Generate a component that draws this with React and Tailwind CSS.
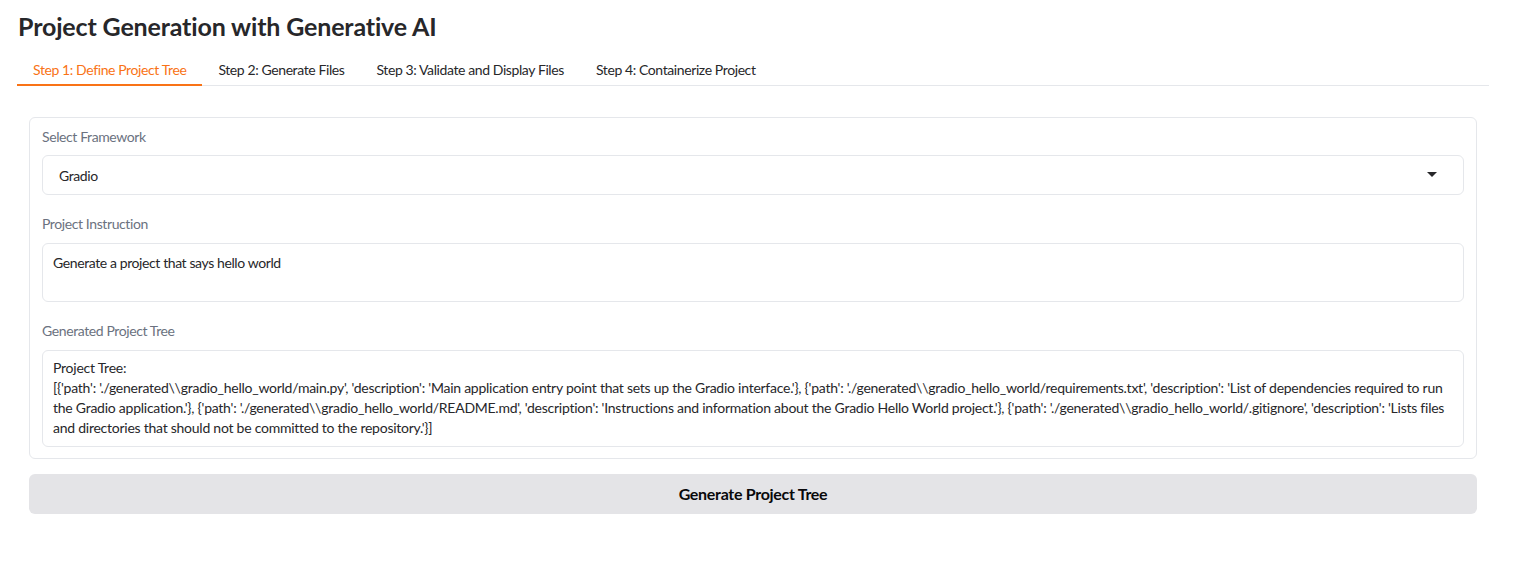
import React from "react";

const font = { fontFamily: "Lato, 'Noto Sans', sans-serif" };

export default function App() {
  const tabs = [
    "Step 1: Define Project Tree",
    "Step 2: Generate Files",
    "Step 3: Validate and Display Files",
    "Step 4: Containerize Project",
  ];
  return (
    <div className="w-[1526px] h-[580px] bg-white text-[#27272a]" style={font}>
      <div className="pl-[17px] pr-[37px] pt-[11px]">
        <h1 className="pl-[1px] text-[25px] leading-[30px] font-bold text-[#27272a] tracking-[-0.15px]">
          Project Generation with Generative AI
        </h1>
        <div className="mt-[14px] flex border-b border-[#e5e7eb] h-[31px] tracking-[-0.4px]">
          {tabs.map((t, i) => (
            <div
              key={t}
              className={
                i === 0
                  ? "px-4 text-[14px] leading-[29px] text-[#f97316] border-b-2 border-[#f97316] -mb-px"
                  : "px-4 text-[14px] leading-[29px] text-[#27272a]"
              }
            >
              {t}
            </div>
          ))}
        </div>
        <div className="px-3 pt-[31px]">
          <div className="border border-[#e5e7eb] rounded-[6px] px-3 pt-[10px] pb-[11px] tracking-[-0.4px]">
            <div className="text-[14px] leading-[18px] text-[#6b7280]">Select Framework</div>
            <div className="mt-[9px] h-[40px] border border-[#e5e7eb] rounded-[6px] flex items-center justify-between pl-[16px] pr-[26px] text-[14px]">
              <span>Gradio</span>
              <svg width="10" height="6" viewBox="0 0 10 6">
                <path d="M0 0 L10 0 L5 5 Z" fill="#27272a" />
              </svg>
            </div>
            <div className="mt-[20px] text-[14px] leading-[18px] text-[#6b7280]">Project Instruction</div>
            <div className="mt-[10px] h-[59px] border border-[#e5e7eb] rounded-[6px] px-[10px] pt-[9px] text-[14px] leading-[20px]">
              Generate a project that says hello world
            </div>
            <div className="mt-[20px] text-[14px] leading-[18px] text-[#6b7280]">Generated Project Tree</div>
            <div className="mt-[10px] border border-[#e5e7eb] rounded-[6px] px-[10px] pt-[7px] pb-[8px] text-[14px] leading-[20px] whitespace-nowrap overflow-hidden tracking-[-0.25px]">
              <div>Project Tree:</div>
              <div>
                [{"{"}'path': './generated\\gradio_hello_world/main.py', 'description': 'Main application entry point that sets up the Gradio interface.'{"}"}, {"{"}'path': './generated\\gradio_hello_world/requirements.txt', 'description': 'List of dependencies required to run
              </div>
              <div>
                the Gradio application.'{"}"}, {"{"}'path': './generated\\gradio_hello_world/README.md', 'description': 'Instructions and information about the Gradio Hello World project.'{"}"}, {"{"}'path': './generated\\gradio_hello_world/.gitignore', 'description': 'Lists files
              </div>
              <div>and directories that should not be committed to the repository.'{"}"}]</div>
            </div>
          </div>
          <button className="mt-[15px] w-full h-[40px] rounded-[6px] bg-[#e4e4e7] text-[16px] font-bold text-[#09090b] tracking-[-0.3px]">
            Generate Project Tree
          </button>
        </div>
      </div>
    </div>
  );
}
